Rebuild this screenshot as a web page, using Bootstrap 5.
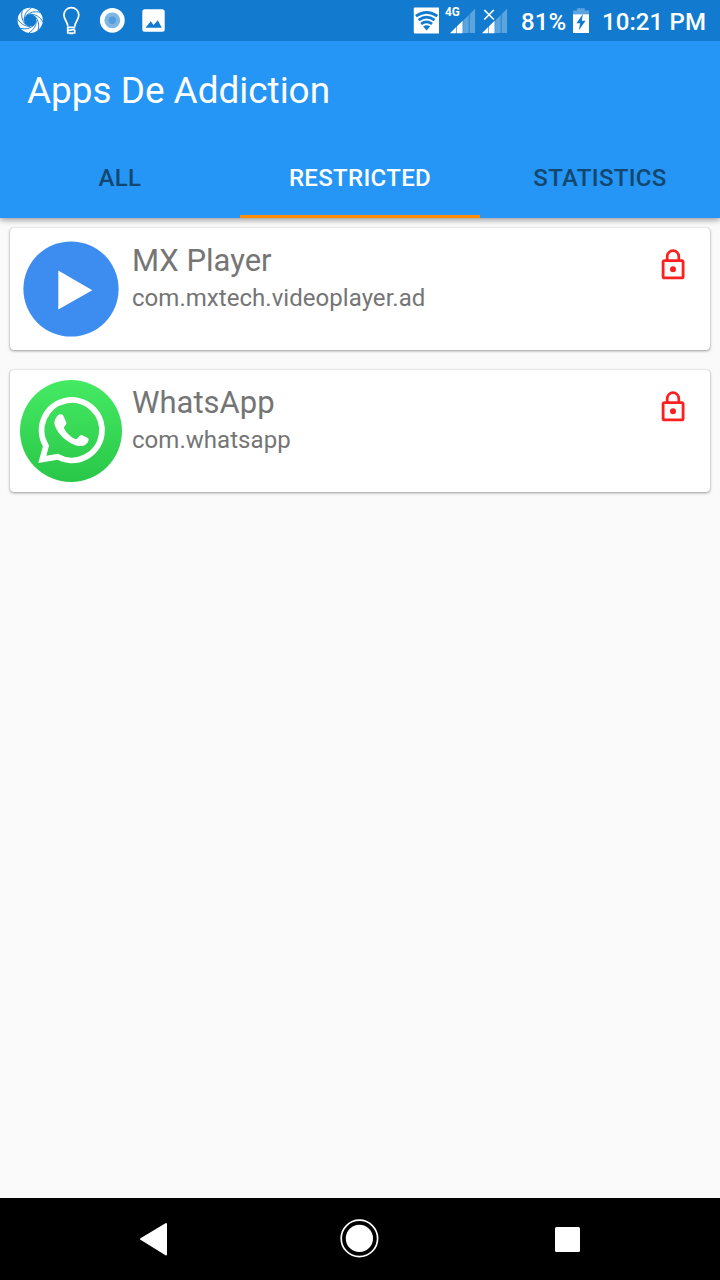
<!DOCTYPE html>
<html lang="en">
<head>
<meta charset="utf-8">
<meta name="viewport" content="width=device-width, initial-scale=1">
<title>Apps De Addiction</title>
<link href="https://cdn.jsdelivr.net/npm/bootstrap@5.3.0/dist/css/bootstrap.min.css" rel="stylesheet">
<style>
body{font-family:Roboto,"Liberation Sans",sans-serif;background:#fafafa;height:1280px;overflow:hidden}
svg{display:block;flex:none}
.status{height:41px;background:#127bd0;color:#fff;padding:0 14px 0 17px;font-weight:500;font-size:24px;line-height:44px;z-index:2}
.clock{letter-spacing:.12px}
.appbar{background:#2596f5;height:177px;box-shadow:0 2px 6px rgba(0,0,0,.4)}
.apptitle{height:96px;padding:0 27px;font-size:36.9px;line-height:99px;color:#fff;font-weight:400;white-space:nowrap}
.tabs .nav-link{height:81px;padding:0;line-height:82px;font-size:24px;letter-spacing:.32px;font-weight:500;color:#12476f;border-bottom:0;border-radius:0}
.tabs .nav-link.active{color:#fff;box-shadow:inset 0 -3px #ff8c05}
.app-list{padding:10px;gap:20px}
.app-card{height:122px;padding:10px;border:0;border-radius:4px;box-shadow:0 1px 3px rgba(0,0,0,.38),0 0 1px rgba(0,0,0,.25);color:#757575}
.app-info{margin-left:10px}
.app-name{font-size:31px;line-height:38px;margin-top:4px;white-space:nowrap}
.app-pkg{font-size:24px;line-height:28px;margin-top:4px;white-space:nowrap;letter-spacing:.04px}
.lock{margin:9px 12px 0 0}
.navkeys{height:82px;background:#000}
</style>
</head>
<body class="d-flex flex-column">
<svg width="0" height="0" class="position-absolute">
  <defs>
    <linearGradient id="wa" x1="0" y1="0" x2="0" y2="1"><stop offset="0" stop-color="#45ea63"/><stop offset="1" stop-color="#29c748"/></linearGradient>
    <symbol id="lock" viewBox="0 0 30 34"><path d="M9.200 14V9.500a5.800 5.800 0 0 1 11.600 0V14" fill="none" stroke="#fb2020" stroke-width="2.700"/><rect x="5.100" y="13.600" width="20" height="17.300" rx="1.500" fill="none" stroke="#fb2020" stroke-width="2.800"/><circle cx="15" cy="22.300" r="3" fill="#fb2020"/></symbol>
  </defs>
</svg>

<header class="status d-flex justify-content-between position-relative">
  <div class="d-flex">
    <svg width="27" height="41" viewBox="0 0 27 41">
      <g transform="translate(.2 7)" fill="none">
        <circle cx="13" cy="13.300" r="9.400" stroke="#fff" stroke-width="6.400"/>
        <g stroke="#127bd0" stroke-width=".9">
          <path id="swirl" d="M6.800 13Q7 5 14.500 .5"/>
          <use href="#swirl" transform="rotate(45 13 13.300)"/><use href="#swirl" transform="rotate(90 13 13.300)"/><use href="#swirl" transform="rotate(135 13 13.300)"/><use href="#swirl" transform="rotate(180 13 13.300)"/><use href="#swirl" transform="rotate(225 13 13.300)"/><use href="#swirl" transform="rotate(270 13 13.300)"/><use href="#swirl" transform="rotate(315 13 13.300)"/>
        </g>
      </g>
    </svg>
    <svg class="ms-3" width="22" height="41" viewBox="60 0 22 41" fill="none" stroke="#fff" stroke-width="1.700">
      <path d="M67.800 26.500C67.800 21.500 63.900 20 63.900 15a7.400 7.400 0 0 1 14.900 0c0 5-3.900 6.500-3.900 11.500"/>
      <path d="M67 27.300h8.300M74.700 29.400l-7 1.300M67.700 27v6h7v-3.500M69.500 33.500h3.500" stroke-width="1.700"/>
    </svg>
    <svg width="36" height="41" viewBox="82 0 36 41" overflow="visible" class="me-2"><circle cx="112.300" cy="20.300" r="12.400" fill="#fff"/><circle cx="112.300" cy="20.300" r="7.900" fill="#7db5e5"/><circle cx="112.300" cy="20.300" r="3.700" fill="#539ddc"/></svg>
    <svg width="40" height="41" viewBox="126 0 40 41"><rect x="142.300" y="9.300" width="22.400" height="22.400" rx="2.500" fill="#fff"/><path d="M145.500 27.700l5.200-6.500 2.900 3.700 4.200-4.700 4 7.500z" fill="#127bd0"/></svg>
  </div>
  <div class="d-flex text-nowrap">
    <svg width="26" height="41" viewBox="412.700 0 26 41">
      <rect x="413.500" y="7.500" width="25.500" height="26" rx="1" fill="#fff"/>
      <g fill="none" stroke="#127bd0" stroke-width="2.700"><path d="M415.600 16.200Q426.300 8.400 437 16.200"/><path d="M418.300 20.100Q426.300 14 434.300 20.100"/><path d="M420.800 23.800Q426.300 19.800 431.800 23.800"/></g><path d="M422.800 26.400q3.500-2.500 7 0l-3.500 4z" fill="#127bd0"/>
    </svg>
    <svg width="37" height="41" viewBox="438.700 0 37 41">
      <text x="444.800" y="16.300" font-size="12" font-weight="700" fill="#fff" textLength="14.800" lengthAdjust="spacingAndGlyphs">4G</text>
      <g fill="#5ba4de"><path d="M462.800 20.700l5.700-5.600V33h-5.700zM469.300 14.300l5.500-5.500V33h-5.500z"/></g><path d="M449.700 33.200l6.200-6.100v6.100zM456.500 26.600l5.800-5.800v12.400h-5.800z" fill="#fff"/>
    </svg>
    <svg width="45" height="41" viewBox="475.700 0 45 41">
      <path d="M484 10l9.500 9.500M493.500 10l-9.500 9.500" stroke="#fff" stroke-width="1.700"/>
      <g fill="#5ba4de"><path d="M494.800 20.700l5.700-5.600V33h-5.700zM501.300 14.300l5.500-5.500V33h-5.500z"/></g><path d="M481.700 33.200l6.200-6.100v6.100zM488.500 26.600l5.800-5.800v12.400h-5.800z" fill="#fff"/>
    </svg>
    <span class="clock ps-0">81%</span>
    <svg width="35.500" height="41" viewBox="567 0 35.500 41"><path d="M574 14.500V10.500h4V8.300h7.800v2.200h4.200v4z" fill="#5ba4de"/><path d="M574 14.300h16V33h-16z" fill="#fff"/><path d="M583.900 14l-6.500 9.200h3.700l-1.300 7 6.800-9.400h-3.800z" fill="#127bd0"/></svg>
    <span class="clock">10:21 PM</span>
  </div>
</header>

<div class="appbar position-relative">
  <h1 class="apptitle m-0">Apps De Addiction</h1>
  <ul class="nav nav-fill tabs row g-0">
    <li class="nav-item col-4"><a class="nav-link" href="#">ALL</a></li>
    <li class="nav-item col-4"><a class="nav-link active" href="#">RESTRICTED</a></li>
    <li class="nav-item col-4"><a class="nav-link" href="#">STATISTICS</a></li>
  </ul>
</div>

<main class="app-list d-flex flex-column flex-grow-1">
  <div class="card app-card flex-row align-items-start">
    <svg width="102" height="102" viewBox="0 0 102 102"><circle cx="51" cy="51" r="47.600" fill="#3d8cef"/><path d="M38.300 32.500l34 19.700-34 19.300z" fill="#fff"/></svg>
    <div class="app-info flex-grow-1"><div class="app-name">MX Player</div><div class="app-pkg">com.mxtech.videoplayer.ad</div></div>
    <svg class="lock" width="30" height="34"><use href="#lock"/></svg>
  </div>
  <div class="card app-card flex-row align-items-start">
    <svg width="102" height="102" viewBox="0 0 102 102"><circle cx="51" cy="51" r="51" fill="url(#wa)"/>
      <path d="M22.300 79.300L26 65.900A30.200 30.200 0 1 1 37.500 76.800z" fill="none" stroke="#fff" stroke-width="5.800"/>
      <path d="M38 35.200c1.600-1.500 4.500-1.300 5.300.5l3 6.800c.9 2-2.900 4.300-2.400 5.800 2.300 4.500 6.500 8.700 11.600 11 1.800.5 4.200-4.900 6.200-4.200l6.200 3c1.400.8.700 3.600-.8 5.200-3.600 3.600-7.900 3.500-13.400 1.100C45 60.700 38 54.200 34.900 45.500c-1.200-3.800.3-7.700 3.100-10.300z" fill="#fff"/></svg>
    <div class="app-info flex-grow-1"><div class="app-name">WhatsApp</div><div class="app-pkg">com.whatsapp</div></div>
    <svg class="lock" width="30" height="34"><use href="#lock"/></svg>
  </div>
</main>

<footer class="navkeys row g-0 flex-shrink-0">
  <svg width="720" height="82" viewBox="0 1198 720 82" fill="#fff">
    <path d="M141 1239l25-15v30.500z" stroke="#fff" stroke-width="2" stroke-linejoin="round"/>
    <circle cx="359.400" cy="1238.400" r="13.600"/><circle cx="359.400" cy="1238.400" r="18.200" fill="none" stroke="#fff" stroke-width="1.700"/>
    <rect x="555" y="1227" width="25" height="25" rx="1.500"/>
  </svg>
</footer>
<script src="https://cdn.jsdelivr.net/npm/bootstrap@5.3.0/dist/js/bootstrap.bundle.min.js"></script>
</body>
</html>
